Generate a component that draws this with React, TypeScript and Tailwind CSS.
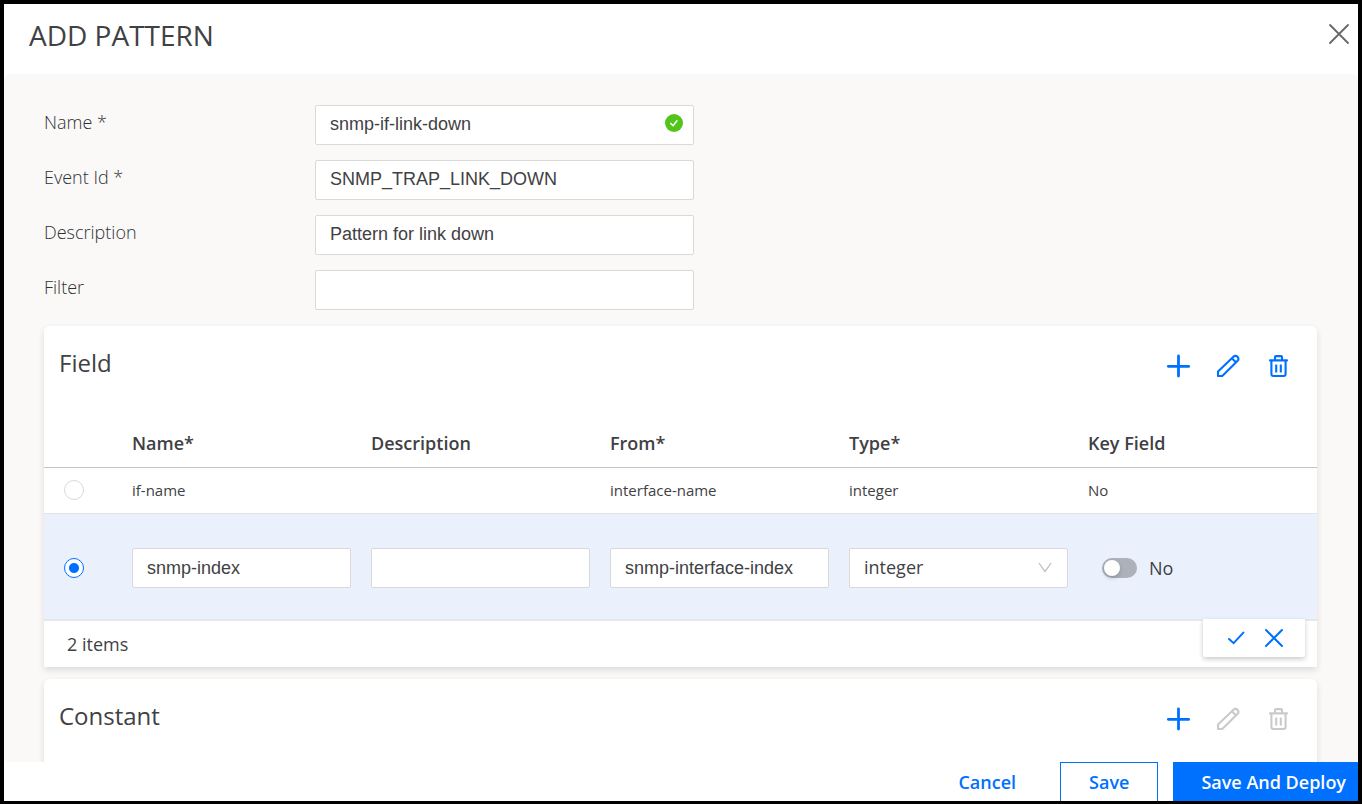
import { useState } from "react";
import type { ReactNode } from "react";

const inputClass =
  "block h-10 w-full rounded-xs border border-[#d9d9d9] bg-white px-3.5 pb-0.5 font-['Liberation_Sans',sans-serif] text-lg text-[#3f4144] outline-none focus:border-[#0070ff]";

const cellInputClass =
  "block h-10 w-full rounded-xs border border-[#d9d9d9] bg-white px-3.5 font-['Liberation_Sans',sans-serif] text-lg text-[#3f4144] outline-none focus:border-[#0070ff]";

function CloseIcon() {
  return (
    <svg width="22" height="22" viewBox="0 0 22 22" fill="none" stroke="currentColor" strokeWidth="1.8" strokeLinecap="round">
      <path d="M2 2 20 20M20 2 2 20" />
    </svg>
  );
}

function PlusIcon() {
  return (
    <svg width="24" height="24" viewBox="0 0 24 24" fill="none" stroke="currentColor" strokeWidth="2.8" strokeLinecap="round">
      <path d="M12.5 2V22M2.3 12.3H22.7" />
    </svg>
  );
}

function PencilIcon() {
  return (
    <svg width="24" height="24" viewBox="0 0 24 24" fill="none" stroke="currentColor" strokeWidth="2.1" strokeLinejoin="round">
      <path d="M2 22V17.4L17.2 2.9Q19.4 1 21.6 2.9Q23.4 5 21.4 7L6.8 21.4Q6.2 22 5.4 22Z" />
      <path d="M15.8 4.2 20.2 8.4" />
    </svg>
  );
}

function TrashIcon() {
  return (
    <svg width="24" height="24" viewBox="0 0 24 24" fill="none" stroke="currentColor" strokeWidth="2.1">
      <path d="M4 6.4H21" strokeLinecap="round" />
      <path d="M9 6V3Q9 2.1 10 2.1H15Q16 2.1 16 3V6" />
      <path d="M5.4 6.4V20Q5.4 22 7.4 22H17.6Q19.6 22 19.6 20V6.4" />
      <path d="M10.2 10.4V18.4M14.8 10.4V18.4" />
    </svg>
  );
}

function FormRow({ id, label, value, valid }: { id: string; label: string; value: string; valid?: boolean }) {
  return (
    <div className="flex h-10 items-start">
      <label htmlFor={id} className="w-[271px] shrink-0 pt-[3px] text-lg font-light text-[#2f3032]">
        {label}
      </label>
      <div className="relative w-full max-w-[379px]">
        <input id={id} defaultValue={value} className={inputClass} />
        {valid && (
          <svg className="absolute top-[9px] right-[11px]" width="18" height="18" viewBox="0 0 18 18" fill="none">
            <circle cx="9" cy="9" r="9" fill="#52c41a" />
            <path d="M5.4 9.1 8.1 11.7 12.3 6.3" stroke="white" strokeWidth="1.5" />
          </svg>
        )}
      </div>
    </div>
  );
}

function CardHeader({ title, locked }: { title: string; locked?: boolean }) {
  const edit = locked ? "text-[#cacaca]" : "text-[#0070ff]";
  return (
    <div className="flex h-[93px] items-start justify-between pt-[19px] pr-[27px] pl-[15px]">
      <h2 className="text-2xl font-medium leading-9 text-[#3f4144]">{title}</h2>
      <div className="flex gap-[26px] pt-[9px]">
        <button type="button" aria-label={`Add ${title}`} className="text-[#0070ff]">
          <PlusIcon />
        </button>
        <button type="button" aria-label={`Edit ${title}`} disabled={locked} className={edit}>
          <PencilIcon />
        </button>
        <button type="button" aria-label={`Delete ${title}`} disabled={locked} className={edit}>
          <TrashIcon />
        </button>
      </div>
    </div>
  );
}

function Card({ children }: { children: ReactNode }) {
  return <section className="relative rounded-t-md bg-white shadow-[0_3px_7px_rgba(0,0,0,0.12)]">{children}</section>;
}

function RowRadio({ label, checked, onChange }: { label: string; checked: boolean; onChange: () => void }) {
  return (
    <input
      type="radio"
      name="field-row"
      aria-label={label}
      checked={checked}
      onChange={onChange}
      className="block size-5 appearance-none rounded-full border border-[#d9d9d9] bg-white checked:border-[#0070ff] checked:bg-[radial-gradient(circle,#0070ff_4.5px,white_5.5px)]"
    />
  );
}

export default function App() {
  const [row, setRow] = useState(1);
  const [key, setKey] = useState(false);

  return (
    <div className="flex h-screen flex-col border-4 border-b-3 border-black bg-white font-['Open_Sans',sans-serif] text-[#3f4144]">
      <header className="flex h-[70px] shrink-0 items-start justify-between pt-[11px] pr-2 pl-[25px]">
        <h1 className="text-[28px] font-medium leading-10">ADD PATTERN</h1>
        <button type="button" aria-label="Close" className="pt-2 text-[#666769]">
          <CloseIcon />
        </button>
      </header>

      <main className="min-h-0 flex-1 overflow-y-auto rounded-md bg-[#faf9f8] px-10 pt-[31px] [scrollbar-width:none]">
        <form className="flex flex-col gap-[15px]">
          <FormRow id="name" label="Name *" value="snmp-if-link-down" valid />
          <FormRow id="event" label="Event Id *" value="SNMP_TRAP_LINK_DOWN" />
          <FormRow id="description" label="Description" value="Pattern for link down" />
          <FormRow id="filter" label="Filter" value="" />
        </form>

        <div className="mt-4 flex flex-col gap-3 pr-px">
          <Card>
            <CardHeader title="Field" />
            <table className="w-full table-fixed border-collapse text-left">
              <thead>
                <tr className="h-12 border-b border-[#c4c4c4] text-lg">
                  <th className="w-[78px]" aria-label="Select"></th>
                  <th className="px-2.5 font-semibold">Name*</th>
                  <th className="px-2.5 font-semibold">Description</th>
                  <th className="px-2.5 font-semibold">From*</th>
                  <th className="px-2.5 font-semibold">Type*</th>
                  <th className="px-2.5 font-semibold">Key Field</th>
                </tr>
              </thead>
              <tbody>
                <tr className="h-[46px] border-b border-[#e2e4e8] text-[15px] font-medium">
                  <td className="pl-5">
                    <RowRadio label="if-name" checked={row === 0} onChange={() => setRow(0)} />
                  </td>
                  <td className="px-2.5">if-name</td>
                  <td className="px-2.5"></td>
                  <td className="px-2.5">interface-name</td>
                  <td className="px-2.5">integer</td>
                  <td className="px-2.5">No</td>
                </tr>
                <tr className="h-[107px] border-b-2 border-[#e6e7e9] bg-[#eaf1fd] text-lg font-medium">
                  <td className="pt-1 pl-5">
                    <RowRadio label="snmp-index" checked={row === 1} onChange={() => setRow(1)} />
                  </td>
                  <td className="px-2.5 pt-1">
                    <input aria-label="Field name" defaultValue="snmp-index" className={cellInputClass} />
                  </td>
                  <td className="px-2.5 pt-1">
                    <input aria-label="Field description" className={cellInputClass} />
                  </td>
                  <td className="px-2.5 pt-1">
                    <input aria-label="From" defaultValue="snmp-interface-index" className={cellInputClass} />
                  </td>
                  <td className="px-2.5 pt-1">
                    <div className="relative">
                      <select
                        aria-label="Type"
                        defaultValue="integer"
                        className="block h-10 w-full appearance-none rounded-xs border border-[#d9d9d9] bg-white px-3.5 pb-0.5 text-lg font-medium outline-none"
                      >
                        <option>integer</option>
                        <option>string</option>
                      </select>
                      <svg
                        className="pointer-events-none absolute top-3.5 right-4"
                        width="14"
                        height="12"
                        viewBox="0 0 14 12"
                        fill="none"
                        stroke="#bfbfbf"
                        strokeWidth="1.3"
                      >
                        <path d="M1 1 7 9.5 13 1" />
                      </svg>
                    </div>
                  </td>
                  <td className="px-2.5 pt-1">
                    <label className="flex items-center gap-3 pl-3.5">
                      <input
                        type="checkbox"
                        role="switch"
                        checked={key}
                        onChange={() => setKey(!key)}
                        className="flex h-5 w-[35px] appearance-none items-center rounded-full bg-[#adb1b9] px-0.5 before:size-4 before:rounded-full before:bg-white before:shadow-[0_2px_4px_rgba(0,35,11,0.2)] checked:justify-end checked:bg-[#0070ff]"
                      />
                      {key ? "Yes" : "No"}
                    </label>
                  </td>
                </tr>
              </tbody>
            </table>
            <p className="flex h-[46px] items-center pl-[23px] text-lg font-medium">2 items</p>
            <div className="absolute right-3 bottom-2.5 flex h-[38px] w-[102px] items-center justify-between rounded-b-xs bg-white pr-[21px] pl-6 text-[#0070ff] shadow-[0_2px_5px_rgba(0,0,0,0.22)]">
              <button type="button" aria-label="Confirm row">
                <svg width="18" height="16" viewBox="0 0 18 16" fill="none" stroke="currentColor" strokeWidth="2" strokeLinecap="round">
                  <path d="M2 9 6.6 13.2 16.4 2.6" />
                </svg>
              </button>
              <button type="button" aria-label="Cancel row">
                <svg width="20" height="20" viewBox="0 0 20 20" fill="none" stroke="currentColor" strokeWidth="2" strokeLinecap="round">
                  <path d="M2 2 18 18M18 2 2 18" />
                </svg>
              </button>
            </div>
          </Card>
          <Card>
            <CardHeader title="Constant" locked />
          </Card>
        </div>
      </main>

      <footer className="flex h-[39px] shrink-0 items-start justify-end overflow-hidden text-lg font-semibold text-[#0070ff]">
        <button type="button" className="mr-4 h-10 px-7">
          Cancel
        </button>
        <button type="button" className="mr-[15px] h-10 border border-[#0070ff] px-7">
          Save
        </button>
        <button type="button" className="h-10 bg-[#0070ff] pr-3 pl-7 text-white">
          Save And Deploy
        </button>
      </footer>
    </div>
  );
}
